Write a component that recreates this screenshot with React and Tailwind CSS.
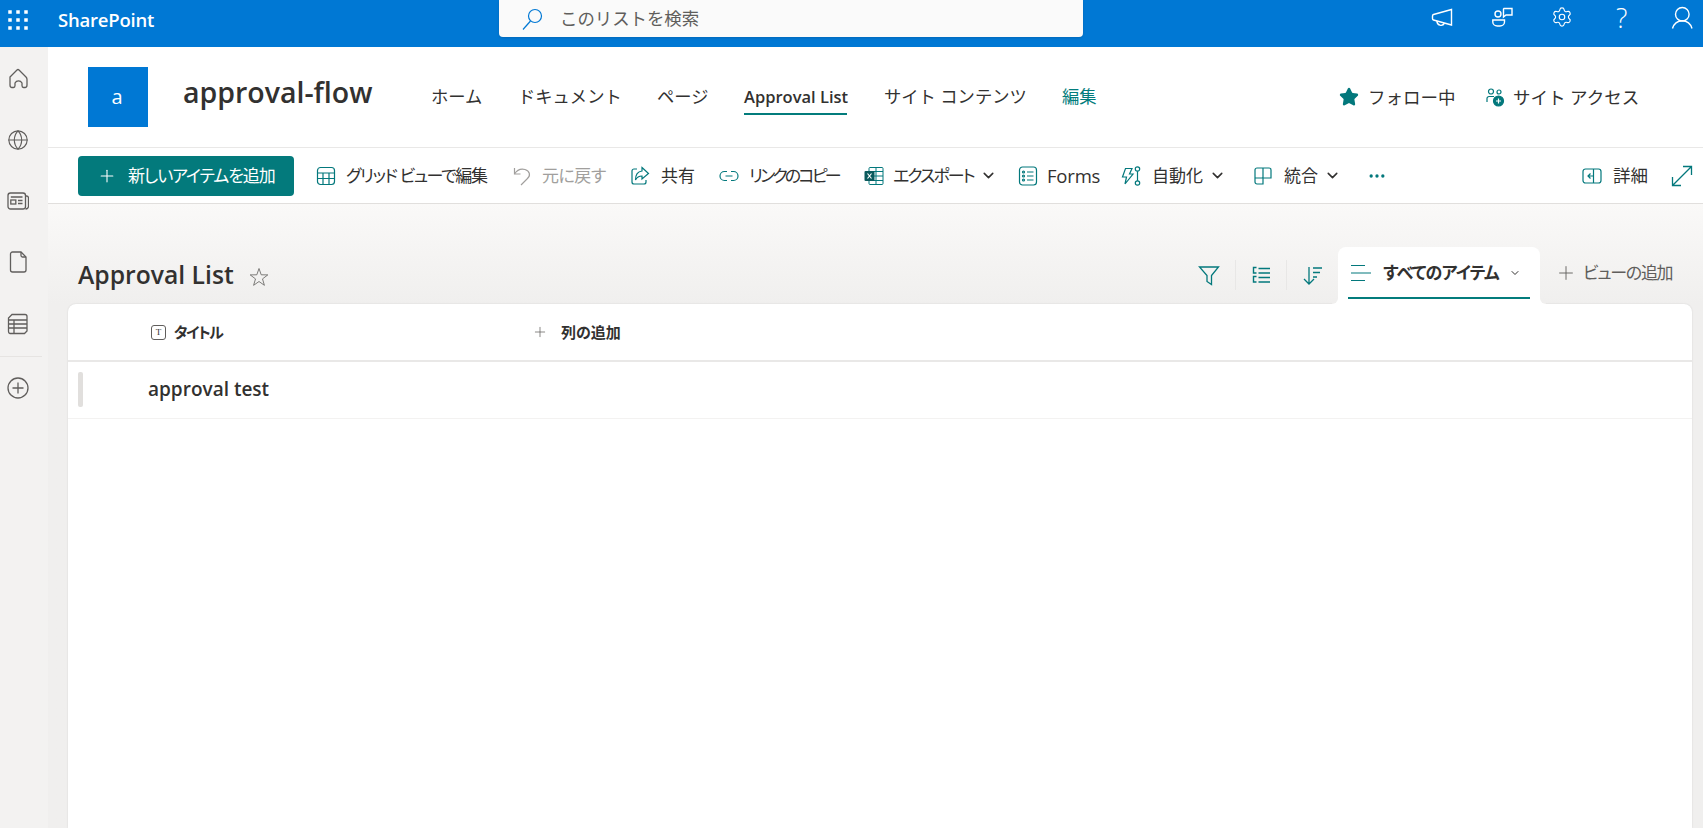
import React from "react";
import { Plus, Star, ChevronDown, Ellipsis, Globe, Settings } from "lucide-react";

const CJK = "font-['Open_Sans','Noto_Sans_CJK_JP',sans-serif]";
const Palt = "[font-feature-settings:'palt']";
const Teal = "text-[#03787c]";

const I = ({ className = "", children, w = 20, h = 20, vb, sw = 1.2 }) => (
  <svg width={w} height={h} viewBox={vb || "0 0 " + w + " " + h} fill="none" stroke="currentColor" strokeWidth={sw} className={"shrink-0 " + className}>
    {children}
  </svg>
);

const Waffle = () => (
  <svg width="20" height="20" viewBox="0 0 20 20" fill="currentColor">
    {[2, 10, 18].map((y) => [2, 10, 18].map((x) => <rect key={x + "-" + y} x={x - 1.75} y={y - 1.75} width="3.5" height="3.5" />))}
  </svg>
);

function TopBar() {
  return (
    <header className="h-[47px] bg-[#0078d4] text-white flex items-center shrink-0 relative">
      <div className="ml-[8px] -mt-[7px]"><Waffle /></div>
      <div className="ml-[30px] w-[120px] text-[18.5px] font-semibold -mt-[7px] tracking-[-0.2px]">SharePoint</div>
      <div className="ml-[321px] w-[584px] h-[37px] self-start bg-[#fafafa] rounded-b-[4px] shadow-sm flex items-center text-[#605e5c]">
        <I className="ml-[21px] text-[#0078d4]" w={24} h={24}>
          <circle cx="15" cy="9" r="6.5" />
          <path d="M10.5 14 L3 22.5" />
        </I>
        <span className="ml-[16px] text-[17.4px]">このリストを検索</span>
      </div>
      <div className="ml-[348px] flex items-center -mt-[13px]">
        <I w={22} h={22} sw={1.4}>
          <path d="M2.5 8.5 L20.5 3.5 V19 L2.5 14 Q1.5 13.7 1.5 12.5 V10 Q1.5 8.8 2.5 8.5 Z" />
          <path d="M6 15 A4 4 0 0 0 13.5 17.2" />
        </I>
        <I className="ml-[38px]" w={22} h={22} sw={1.4}>
          <path d="M13 2.5 H21 V9 H15 L12.5 11 V3 Z" />
          <circle cx="7" cy="8" r="3" />
          <path d="M1.8 14 H13.5 V16 A4.5 4 0 0 1 9 20 H6.3 A4.5 4 0 0 1 1.8 16 Z" />
        </I>
        <Settings size={22} strokeWidth={1.25} className="ml-[38px]" />
        <span className="ml-[43px] w-[12px] text-[27px] font-light leading-none">?</span>
        <I className="ml-[43px]" w={22} h={24} sw={1.4}>
          <circle cx="11.3" cy="9.3" r="6.8" />
          <path d="M1.5 23.5 A10 10 0 0 1 21 23.5" />
        </I>
      </div>
    </header>
  );
}

function Sidebar() {
  return (
    <aside className="w-[48px] bg-[#f3f2f1] shrink-0 flex flex-col pl-[7px] pt-[20px] text-[#605e5c]">
      <I w={22} h={22} sw={1.3}>
        <path d="M3 10 L10 3 Q11 2 12 3 L19 10 Q20 11 20 12.5 V18 Q20 20.5 18 20.5 H16.5 Q15 20.5 15 18.5 V16 A4 4 0 0 0 8 16 V18.5 Q8 20.5 6.5 20.5 H5 Q3 20.5 3 18 V12.5 Q3 11 3 10 Z" />
      </I>
      <Globe size={22} strokeWidth={1.25} className="mt-[40px]" />
      <I className="mt-[39px]" w={22} h={22} sw={1.3}>
        <rect x="1" y="3" width="17.5" height="16" rx="2.5" />
        <path d="M18.5 6 H19.5 A2 2 0 0 1 21.5 8 V15.5 A3 3 0 0 1 18.5 19" />
        <rect x="3.8" y="10" width="5" height="4" />
        <path d="M3.8 7 H15.5 M11 10.5 H15.5 M11 13.5 H15.5" />
      </I>
      <I className="mt-[39px]" w={22} h={22} sw={1.3}>
        <path d="M5.5 1 H14 L19 6 V19 A2 2 0 0 1 17 21 H5.5 A2 2 0 0 1 3.5 19 V3 A2 2 0 0 1 5.5 1 Z" />
        <path d="M14 1 V4.5 A1.5 1.5 0 0 0 15.5 6 H19" />
      </I>
      <I className="mt-[40px]" w={22} h={22} sw={1.3}>
        <path d="M5 1.5 H18 A2 2 0 0 1 20 3.5 V18 L17.5 20.5 H3 A2 2 0 0 1 1.5 18.5 V5 Z" />
        <path d="M1.5 7 H20 M1.5 11 H20 M1.5 15 H20 M7 7 V20.5" />
      </I>
      <div className="mt-[21px] -ml-[7px] w-[42px] h-px bg-[#e6e4e2]" />
      <I className="mt-[20px]" w={22} h={22} sw={1.3}>
        <circle cx="11" cy="11" r="10" />
        <path d="M11 5.5 V16.5 M5.5 11 H16.5" />
      </I>
    </aside>
  );
}

function SiteHeader() {
  return (
    <div className="h-[101px] border-b border-[#e9e8e7] bg-white flex items-start shrink-0">
      <div className="ml-[40px] mt-[20px] w-[60px] h-[60px] bg-[#0078d4] text-white text-[20px] flex items-center justify-center pr-[2px]">a</div>
      <div className="ml-[35px] mt-[25px] w-[248px] text-[28.5px] leading-[40px] font-semibold text-[#323130]">approval-flow</div>
      <nav className="flex text-[17.3px] text-[#323130] mt-[38px] leading-[24px] whitespace-nowrap">
        <span className="w-[87px]">ホーム</span>
        <span className="w-[139px]">ドキュメント</span>
        <span className="w-[87px]">ページ</span>
        <span className="w-[140px] relative font-semibold text-[16.5px]">
          Approval List
          <span className="absolute left-0 w-[103px] top-[28px] h-[2px] bg-[#037c7c]" />
        </span>
        <span className="w-[178px]">サイト コンテンツ</span>
        <span className="w-[277px] text-[#037c7c]">編集</span>
      </nav>
      <div className="flex items-center text-[17.5px] text-[#323130] mt-[38px] leading-[24px] whitespace-nowrap">
        <Star size={20} fill="#03787c" stroke="#03787c" />
        <span className="ml-[9px] w-[117px]">フォロー中</span>
        <I className={Teal} w={20} h={20}>
          <circle cx="6" cy="4.5" r="2.5" />
          <circle cx="14" cy="5" r="2" />
          <path d="M2 15 V11.5 A2 2 0 0 1 4 9.5 H9" />
          <circle cx="13.5" cy="14" r="5" fill="currentColor" />
          <path d="M13.5 11.5 V16.5 M11 14 H16" stroke="white" />
        </I>
        <span className="ml-[8px]">サイト アクセス</span>
      </div>
    </div>
  );
}

const Item = ({ icon, label, className = "", chevron, color = "text-[#323130]", gap = "ml-[10px]", labelClass = "" }) => (
  <div className={"flex items-center " + className}>
    {icon}
    <span className={gap + " whitespace-nowrap " + color + " " + labelClass}>{label}</span>
    {chevron && <ChevronDown size={17} strokeWidth={2.2} className="ml-[6px] text-[#323130]" />}
  </div>
);

function CommandBar() {
  return (
    <div className={"h-[56px] border-b border-[#e1dfdd] bg-white flex items-center shrink-0 text-[17px] " + Palt}>
      <button className="ml-[30px] w-[216px] h-[40px] bg-[#037a7c] rounded-[4px] text-white flex items-center shrink-0">
        <Plus size={20} strokeWidth={1.3} className="ml-[19px]" />
        <span className="ml-[11px] whitespace-nowrap tracking-[-1.1px]">新しいアイテムを追加</span>
      </button>
      <Item className="ml-[22px] w-[196px]" labelClass="tracking-[-1.4px]" label="グリッド ビューで編集" icon={
        <I className={Teal}><rect x="1.5" y="1.5" width="17" height="17" rx="3" /><path d="M1.5 7 H18.5 M1.5 12.5 H18.5 M7 7 V18.5 M13 7 V18.5" /></I>
      } />
      <Item className="w-[118px]" color="text-[#a19f9d]" labelClass="tracking-[-0.5px]" label="元に戻す" icon={
        <I className="text-[#a19f9d]"><path d="M2.5 2 V8 H8.5" /><path d="M2.5 8 C5 4 9 2.5 13 3.5 C18 5 19 10 15 13 L9 19" /></I>
      } />
      <Item className="w-[89px]" label="共有" gap="ml-[11px]" icon={
        <I className={Teal}><path d="M7 3 H4 A2 2 0 0 0 2 5 V16 A2 2 0 0 0 4 18 H14 A2 2 0 0 0 16 16 V14" /><path d="M12 1.5 L18.5 7.5 L12 13 V10 C9 10 7 11 5.5 14 C5.5 9 8 5.5 12 5 Z" /></I>
      } />
      <Item className="w-[145px]" labelClass="tracking-[-2.8px]" label="リンクのコピー" icon={
        <I className={Teal}><path d="M8 5.5 H5.5 A4.5 4.5 0 0 0 5.5 14.5 H8 M12 5.5 H14.5 A4.5 4.5 0 0 1 14.5 14.5 H12 M6.5 10 H13.5" /></I>
      } />
      <Item className="w-[154px]" gap="ml-[9px]" labelClass="tracking-[-2px]" label="エクスポート" chevron icon={
        <svg width="20" height="20" viewBox="0 0 20 20" className="shrink-0">
          <rect x="5" y="1.5" width="14" height="17" rx="1" fill="white" stroke="#03787c" />
          <path d="M12 1.5 V18.5 M5 5.5 H19 M5 10 H19 M5 14.5 H19" stroke="#03787c" />
          <rect x="0.5" y="5" width="10" height="10" rx="1" fill="#0b5a5c" />
          <path d="M3.5 7.5 L7.5 12.5 M7.5 7.5 L3.5 12.5" stroke="white" strokeWidth="1.2" />
        </svg>
      } />
      <Item className="w-[103px]" gap="ml-[9px]" labelClass="text-[18.5px] tracking-[-0.2px]" label="Forms" icon={
        <I className={Teal}><rect x="1.5" y="1" width="17" height="18" rx="3" /><circle cx="5.5" cy="6" r="1" /><circle cx="5.5" cy="10" r="1" /><circle cx="5.5" cy="14" r="1" /><path d="M9 6 H15.5 M9 10 H15.5 M9 14 H15.5" /></I>
      } />
      <Item className="w-[132px]" gap="ml-[11px]" label="自動化" chevron icon={
        <I className={Teal}><circle cx="16.5" cy="3" r="2.2" /><circle cx="16.5" cy="17" r="2.2" /><path d="M16.5 5.2 V14.8" /><path d="M4.5 2.5 H11 L8.5 8 H12 L4 18 L5.5 11 H1.5 Z" /></I>
      } />
      <Item className="w-[114px]" gap="ml-[11px]" label="統合" chevron icon={
        <I className={Teal}><path d="M2 4 A2 2 0 0 1 4 2 H16 A2 2 0 0 1 18 4 V12 H10 V18 H4 A2 2 0 0 1 2 16 Z" /><path d="M10 2 V12 M2 12 H10" /></I>
      } />
      <Ellipsis size={20} className={Teal} />
      <Item className="ml-[195px] w-[89px]" gap="ml-[11px]" labelClass="text-[17.5px]" label="詳細" icon={
        <I className={Teal}><rect x="1" y="3" width="18" height="14" rx="2.5" /><path d="M11.5 3 V17 M8.5 7.5 L6 10 L8.5 12.5 M6 10 H11.5" /></I>
      } />
      <I className={Teal} w={22} h={22} sw={1.3}>
        <path d="M1.5 20.5 L20.5 1.5 M12 1.5 H20.5 V10 M1.5 12 V20.5 H10" />
      </I>
    </div>
  );
}

function ListTitleRow() {
  return (
    <div className="h-[100px] flex items-end shrink-0 relative z-10">
      <div className="ml-[30px] mb-[13px] flex items-center">
        <span className="text-[24.7px] font-semibold text-[#323130] leading-[32px]">Approval List</span>
        <I className="ml-[15px] mt-[4px] text-[#605e5c]" w={20} h={20} sw={0.8}>
          <path d="M10 1.5 L12.2 7.8 L18.8 7.9 L13.5 11.9 L15.4 18.3 L10 14.5 L4.6 18.3 L6.5 11.9 L1.2 7.9 L7.8 7.8 Z" />
        </I>
      </div>
      <div className="ml-auto flex items-center self-end h-[57px]">
        <div className="flex items-center -mt-[1px]">
          <I className={Teal} w={22} h={22} sw={1.3}>
            <path d="M1.5 3 H20.5 L13.5 11.5 V20.5 L9 17.5 V11.5 Z" />
          </I>
          <div className="mx-[15px] w-px h-[30px] bg-[#e8e7e6]" />
          <I className={Teal}><path d="M5.5 2.5 H2.5 V8 H5.5 M5.5 11.5 H2.5 V17 H5.5 M7.5 3.5 H19 M7.5 8 H19 M7.5 12.5 H19 M7.5 17 H19" strokeWidth="1.4" /></I>
          <div className="ml-[15px] mr-[16px] w-px h-[30px] bg-[#e8e7e6]" />
          <I className={Teal}><path d="M6 2 V19 M1 14 L6 19 L11 14 M10 3 H19 M10 7.5 H17 M10 12 H14" strokeWidth="1.3" /></I>
        </div>
        <div className="ml-[15px] w-[202px] h-[57px] bg-white rounded-t-[8px] relative flex items-center">
          <I className="ml-[12px] -mt-[6px] text-[#03787c]" w={22} h={22}>
            <path d="M1 3.5 H15 M1 11 H21 M1 18.5 H15" />
          </I>
          <span className={"ml-[11px] w-[116px] text-[17px] font-bold text-[#323130] -mt-[6px] whitespace-nowrap tracking-[-0.8px] " + Palt}>すべてのアイテム</span>
          <ChevronDown size={12} className="ml-[10px] -mt-[6px] text-[#323130]" />
          <span className="absolute left-[10px] right-[10px] top-[50px] h-[2px] bg-[#037c7c]" />
          <span className="absolute -left-[6px] bottom-0 w-[6px] h-[6px] bg-white">
            <span className="block w-full h-full rounded-br-[6px] bg-[#f0efee]" />
          </span>
          <span className="absolute -right-[6px] bottom-0 w-[6px] h-[6px] bg-white">
            <span className="block w-full h-full rounded-bl-[6px] bg-[#f0efee]" />
          </span>
        </div>
        <div className={"ml-[15px] w-[148px] flex items-center text-[#605e5c] text-[17px] -mt-[6px] " + Palt}>
          <Plus size={22} strokeWidth={1} />
          <span className="ml-[6px] whitespace-nowrap tracking-[-1.3px]">ビューの追加</span>
        </div>
      </div>
    </div>
  );
}

function ListCard() {
  return (
    <div className="ml-[20px] mr-[11px] flex-1 bg-white rounded-t-[8px] shadow-[0_0_2px_rgba(0,0,0,0.12)] min-h-0">
      <div className={"h-[58px] border-b-2 border-[#e9e8e7] flex items-center text-[15px] font-bold text-[#323130] " + Palt}>
        <div className="ml-[83px] w-[15px] h-[15px] border border-[#605e5c] rounded-[3px] flex items-center justify-center">
          <span className="text-[9px] font-normal leading-none font-['Liberation_Serif',serif]">T</span>
        </div>
        <span className="ml-[8px] w-[359px] tracking-[-1.5px]">タイトル</span>
        <Plus size={16} strokeWidth={1.1} className="text-[#605e5c] -ml-[1px]" />
        <span className="ml-[13px]">列の追加</span>
      </div>
      <div className="h-[57px] border-b border-[#f3f2f1] flex items-center pb-[2px]">
        <div className="ml-[10px] w-[5px] h-[35px] bg-[#e1dfdd] rounded-[2px]" />
        <span className="ml-[65px] text-[19px] font-semibold text-[#323130]">approval test</span>
      </div>
    </div>
  );
}

export default function App() {
  return (
    <div className={"w-full h-screen overflow-hidden flex flex-col " + CJK}>
      <TopBar />
      <div className="flex-1 flex min-h-0">
        <Sidebar />
        <main className="flex-1 min-w-0 flex flex-col bg-white">
          <SiteHeader />
          <CommandBar />
          <div className="flex-1 min-h-0 flex flex-col bg-gradient-to-b from-[#faf9f8] to-[#f0efee] to-[100px]">
            <ListTitleRow />
            <ListCard />
          </div>
        </main>
      </div>
    </div>
  );
}
